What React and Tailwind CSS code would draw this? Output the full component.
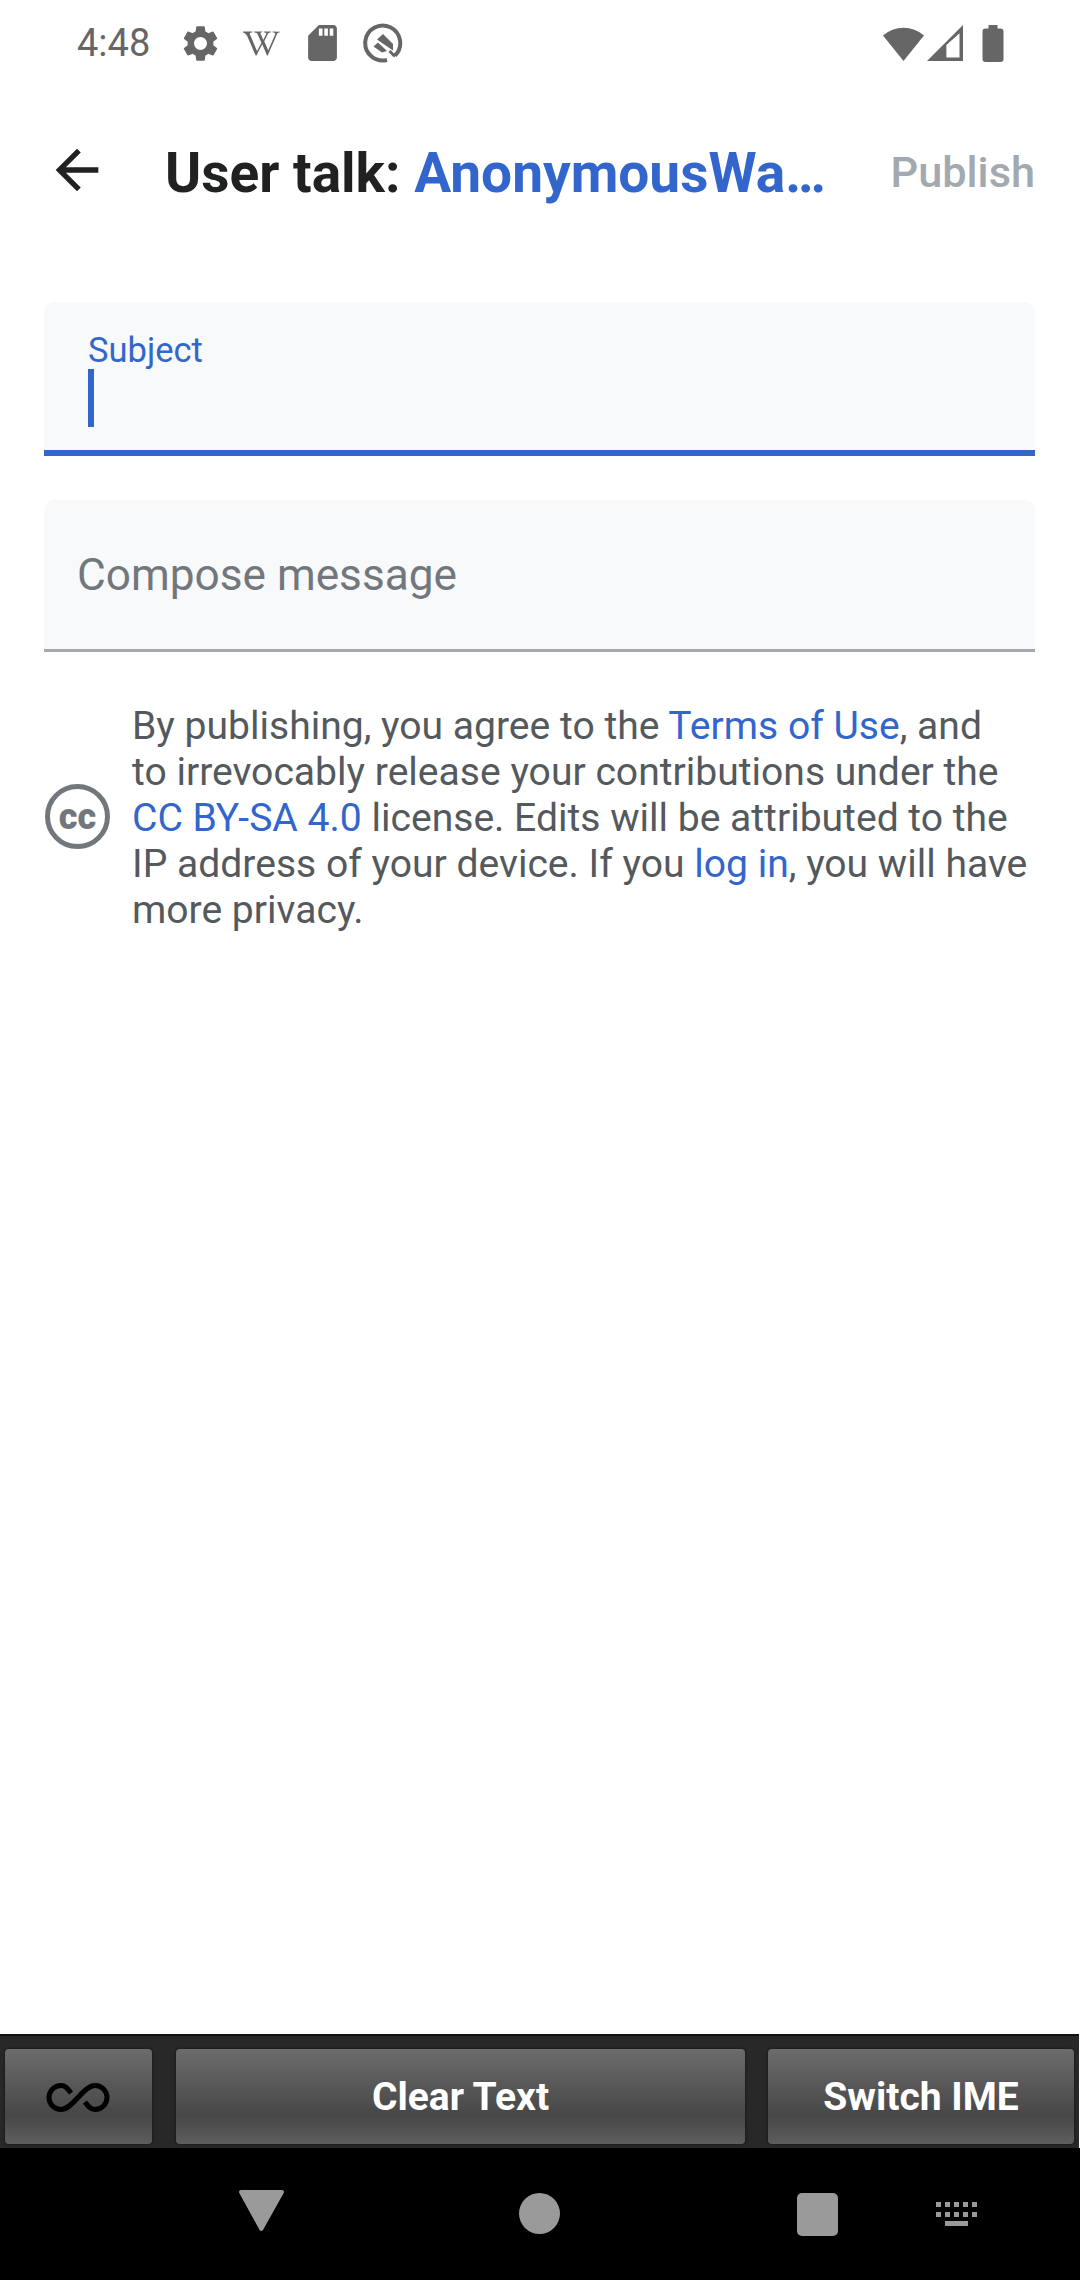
import React from "react";
import { FaWikipediaW } from "react-icons/fa";
import { MdArrowBack, MdSettings } from "react-icons/md";

const BLUE = "text-[#3366cc]";

const QLogo = () => (
  <svg width="40" height="40" viewBox="0 0 40 40" fill="none" className="ml-[26px]">
    <path d="M32 32.500A17.500 17.500 0 1 0 24 37" stroke="#666" strokeWidth="4" />
    <path d="M20 11 30 21V27.500L14 16.500Z" fill="#666" />
    <path d="M10.500 23.500 15 19.500 24 28 19 29.500Z" fill="#666" />
    <path d="M26.500 28 32 33.500" stroke="#666" strokeWidth="3" />
  </svg>
);

const StatusBar = () => (
  <div className="flex h-[90px] items-center pb-[4px] pl-[77px] pr-[76px] text-[#666]">
    <span className="mr-[29px] text-[38px] leading-none">4:48</span>
    <MdSettings size={43} />
    <FaWikipediaW size={37} className="ml-[21px]" />
    <svg width="29" height="36" viewBox="4 2 16 20" fill="#666" className="ml-[28px]">
      <path d="M18 2h-8L4.020 8 4 20c0 1.100.9 2 2 2h12c1.100 0 2-.9 2-2V4c0-1.100-.9-2-2-2zm-6 6h-2V4h2v4zm3 0h-2V4h2v4zm3 0h-2V4h2v4z" />
    </svg>
    <QLogo />
    <div className="ml-auto flex items-center">
      <svg width="41" height="35" viewBox="0 0 41 35" fill="#666" className="-ml-[2px]">
        <path d="M20.500 35 0 9.500A31 31 0 0 1 41 9.500Z" />
      </svg>
      <svg width="36" height="36" viewBox="0 0 34 34" fill="#666" className="ml-[3px]">
        <path fillRule="evenodd" d="M0 34 34 0V34ZM18.300 19 30.700 7.700V30.700H18.300Z" />
      </svg>
      <svg width="22" height="37" viewBox="0 0 21 37" fill="#666" className="ml-[19px]">
        <path d="M6 0h9v3.500h3a3 3 0 0 1 3 3V34a3 3 0 0 1-3 3H3a3 3 0 0 1-3-3V6.500a3 3 0 0 1 3-3h3Z" />
      </svg>
    </div>
  </div>
);

const Header = () => (
  <div className="flex h-[166px] items-center pl-[45px] pr-[45px]">
    <MdArrowBack size={64} color="#202122" className="-mt-[6px] shrink-0" />
    <h1 className="ml-[56px] whitespace-nowrap text-[55px] font-bold leading-none text-[#202122]">
      User talk: <span className={BLUE}>AnonymousWa…</span>
    </h1>
    <span className="-mt-[1px] ml-auto text-[43.300px] font-medium leading-none text-[#a2a9b1]">Publish</span>
  </div>
);

const Form = () => (
  <div className="flex flex-col pl-[44px] pr-[45px] pt-[46px]">
    <div className="flex h-[154px] flex-col rounded-t-[10px] border-b-[6px] border-[#3366cc] bg-[#f8f9fa] pl-[44px] pt-[29px]">
      <label className={`text-[34.500px] leading-[38px] ${BLUE}`}>Subject</label>
      <div className="h-[58px] w-[6px] bg-[#3366cc]" />
    </div>
    <div className="mt-[44px] flex h-[152px] items-center rounded-t-[10px] border-b-[3px] border-[#a2a9b1] bg-[#f8f9fa] pl-[33px] pt-[2px]">
      <span className="text-[44.200px] leading-none text-[#72777d]">Compose message</span>
    </div>
  </div>
);

const Notice = () => (
  <div className="flex items-center pl-[45px] pr-[20px] pt-[51px]">
    <div className="-mt-[3px] flex h-[65px] w-[65px] shrink-0 items-center justify-center rounded-full border-[5px] border-[#72777d]">
      <span className="text-[36px] font-black leading-none text-[#72777d]">cc</span>
    </div>
    <p className="ml-[22px] whitespace-nowrap text-[39.100px] leading-[46px] text-[#54595d]">
      By publishing, you agree to the <a className={BLUE}>Terms of Use</a>, and
      <br />
      to irrevocably release your contributions under the
      <br />
      <a className={BLUE}>CC BY-SA 4.0</a> license. Edits will be attributed to the
      <br />
      IP address of your device. If you <a className={BLUE}>log in</a>, you will have
      <br />
      more privacy.
    </p>
  </div>
);

const KeyButton = ({ className, children }) => (
  <button className={`flex h-[95px] items-center justify-center rounded-[4px] bg-gradient-to-b from-[#6c6c6c] via-[#474747] via-70% to-[#5e5e5e] pt-[2px] shadow-[0_0_3px_#111] ${className}`}>
    {children}
  </button>
);

const KeyboardBar = () => (
  <div className="mr-[1px] flex h-[114px] items-start border-t-[2px] border-[#111] bg-[#282828] pl-[5px] pr-[5px] pt-[13px]">
    <KeyButton className="w-[147px]">
      <svg width="68" height="31" viewBox="0 0 66 31" fill="none" stroke="#000" strokeWidth="5" className="-ml-[1px]">
        <path d="M40 20C43 24 45 27.500 50 27.500A12 12 0 0 0 50 3.500C38 3.500 28 27.500 16 27.500A12 12 0 0 1 16 3.500C21 3.500 23 7 26 11" />
      </svg>
    </KeyButton>
    <KeyButton className="ml-[24px] w-[569px] text-[39px] font-bold text-white">Clear Text</KeyButton>
    <KeyButton className="ml-[23px] w-[306px] text-[39px] font-bold text-white">Switch IME</KeyButton>
  </div>
);

const NavBar = () => (
  <div className="flex h-[132px] items-start bg-black pl-[239px] pt-[42px]">
    <svg width="45" height="41" viewBox="0 0 45 41" fill="#9a9a9a">
      <path d="M2 0h41a2 2 0 0 1 1.700 3L24 40a2 2 0 0 1-3.400 0L.3 3A2 2 0 0 1 2 0Z" />
    </svg>
    <div className="ml-[235px] mt-[3px] h-[41px] w-[41px] rounded-full bg-[#9a9a9a]" />
    <div className="ml-[237px] mt-[3px] h-[43px] w-[41px] rounded-[5px] bg-[#9a9a9a]" />
    <svg width="41" height="24" viewBox="0 0 41 24" fill="#9a9a9a" className="ml-[98px] mt-[12px]">
      <path d="M0 0h5v5H0zM9 0h5v5H9zM18 0h5v5h-5zM27 0h5v5h-5zM36 0h5v5h-5zM0 10h5v5H0zM9 10h5v5H9zM18 10h5v5h-5zM27 10h5v5h-5zM36 10h5v5h-5zM9 19h23v5H9z" />
    </svg>
  </div>
);

export default function App() {
  return (
    <div className="flex h-[2280px] w-[1080px] flex-col bg-white font-['Roboto',sans-serif]">
      <StatusBar />
      <Header />
      <main className="flex-1">
        <Form />
        <Notice />
      </main>
      <KeyboardBar />
      <NavBar />
    </div>
  );
}
